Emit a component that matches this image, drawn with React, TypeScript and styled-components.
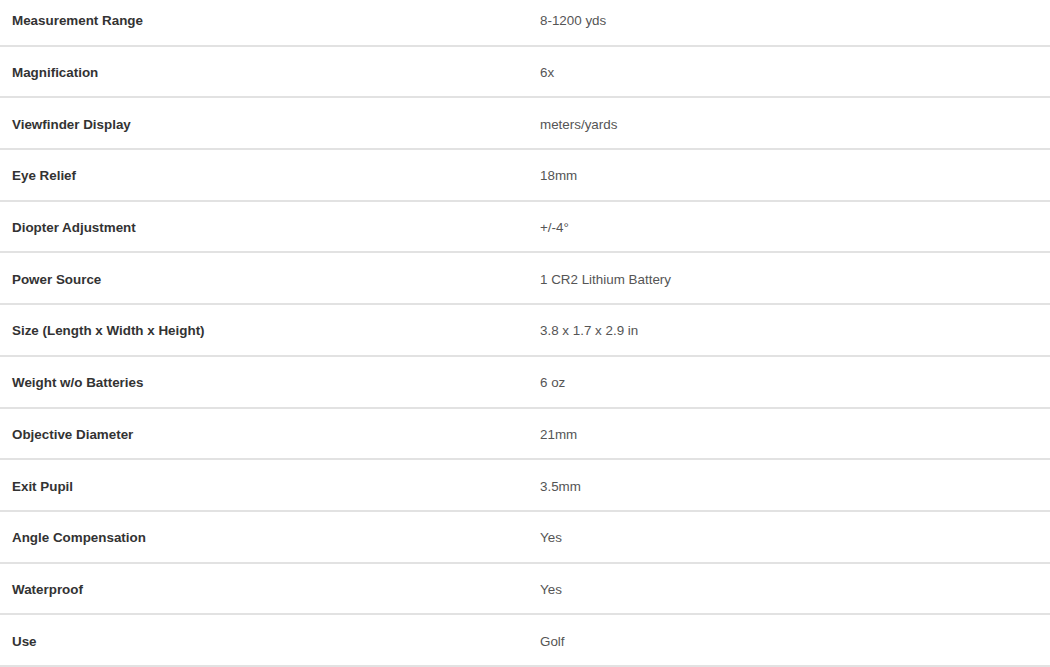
import React from "react";
import styled, { createGlobalStyle } from "styled-components";

const Global = createGlobalStyle`
  html, body { margin: 0; padding: 0; background: #fff; }
  body { font-family: "Liberation Sans", Arial, sans-serif; overflow: hidden; }
`;

const Table = styled.div`
  display: grid;
  grid-template-columns: 528px 1fr;
  width: 1050px;
  margin-top: -5px;
`;

const Row = styled.div`
  display: contents;
`;

const Cell = styled.div<{ $label?: boolean }>`
  box-sizing: border-box;
  height: 51.7px;
  display: flex;
  align-items: center;
  padding: 2px 0 0 12px;
  border-bottom: 2px solid #e2e2e2;
  font-size: 13.4px;
  font-weight: ${(p) => (p.$label ? 700 : 400)};
  color: ${(p) => (p.$label ? "#333" : "#555")};
`;

const rows: [string, string][] = [
  ["Measurement Range", "8-1200 yds"],
  ["Magnification", "6x"],
  ["Viewfinder Display", "meters/yards"],
  ["Eye Relief", "18mm"],
  ["Diopter Adjustment", "+/-4°"],
  ["Power Source", "1 CR2 Lithium Battery"],
  ["Size (Length x Width x Height)", "3.8 x 1.7 x 2.9 in"],
  ["Weight w/o Batteries", "6 oz"],
  ["Objective Diameter", "21mm"],
  ["Exit Pupil", "3.5mm"],
  ["Angle Compensation", "Yes"],
  ["Waterproof", "Yes"],
  ["Use", "Golf"],
];

export default function App() {
  return (
    <>
      <Global />
      <Table>
        {rows.map(([k, v]) => (
          <Row key={k}>
            <Cell $label>{k}</Cell>
            <Cell>{v}</Cell>
          </Row>
        ))}
      </Table>
    </>
  );
}
